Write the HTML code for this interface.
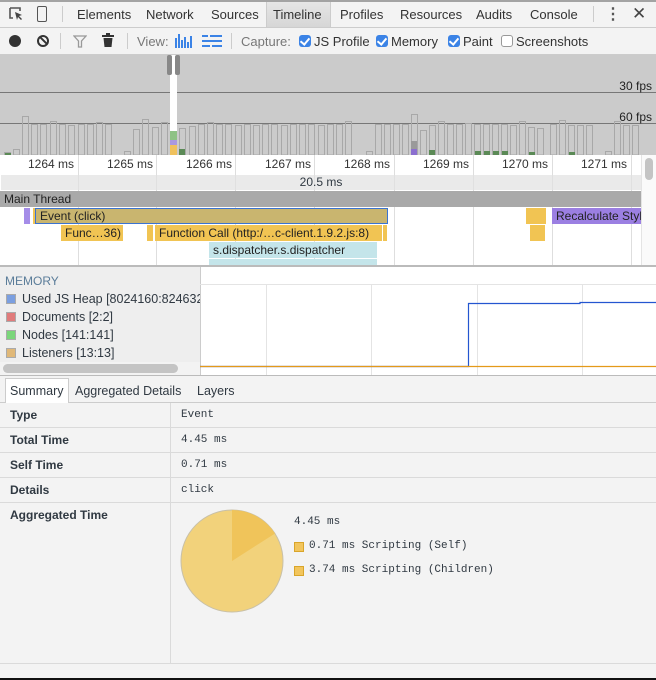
<!DOCTYPE html>
<html><head><meta charset="utf-8"><style>
*{margin:0;padding:0;box-sizing:border-box}
body{width:656px;height:680px;overflow:hidden;background:#f3f3f3;font-family:"Liberation Sans",sans-serif;font-size:12px;color:#303942;position:relative}
.a{position:absolute}
.t{position:absolute;top:7px;font-size:13px;color:#333}
.m{font-family:"Liberation Mono",monospace;font-size:11px}
.cb{position:absolute;top:35px;width:12px;height:12px;border-radius:3px;background:#3b83e6}
.cb::after{content:"";position:absolute;left:3px;top:1px;width:4px;height:7px;border:solid #fff;border-width:0 2px 2px 0;transform:rotate(40deg)}
.lbl{position:absolute;top:34px;font-size:13px;color:#333}
.rl{position:absolute;top:157px;font-size:12px;color:#333}
.gl{position:absolute;top:155px;width:1px;height:111px;background:#dedede}
.ev{position:absolute;height:16px;line-height:16px;font-size:12px;color:#222;padding-left:4px;white-space:nowrap;overflow:hidden}
.row{position:absolute;left:0;width:656px;height:25px;border-bottom:1px solid #dadada}
.row b{position:absolute;left:10px;top:5px;font-size:12px;color:#303942}
.row span{position:absolute;left:181px;top:6px}
</style></head><body>
<div class="a" style="left:0;top:0;width:656px;height:2px;background:#a3a3a3"></div>
<div class="a" style="left:0;top:27px;width:656px;height:1px;background:#ccc"></div>
<!-- tab bar icons -->
<svg class="a" style="left:8;top:6px;left:8px" width="16" height="16" viewBox="0 0 16 16"><path d="M2 2h10v3M2 2v10h3" fill="none" stroke="#555" stroke-width="1.6"/><path d="M7 6l7 3-3 1 3 3-1 1-3-3-1 3z" fill="#444"/></svg>
<div class="a" style="left:37px;top:6px;width:10px;height:16px;border:1.6px solid #555;border-radius:2px"></div>
<div class="a" style="left:62px;top:6px;width:1px;height:16px;background:#ccc"></div>
<div class="a" style="left:266px;top:2px;width:65px;height:25px;background:linear-gradient(#e6e6e6,#d6d6d6);border-left:1px solid #ccc;border-right:1px solid #ccc"></div>
<div class="t" style="left:77px">Elements</div>
<div class="t" style="left:146px">Network</div>
<div class="t" style="left:211px">Sources</div>
<div class="t" style="left:273px">Timeline</div>
<div class="t" style="left:340px">Profiles</div>
<div class="t" style="left:400px">Resources</div>
<div class="t" style="left:476px">Audits</div>
<div class="t" style="left:530px">Console</div>
<div class="a" style="left:593px;top:6px;width:1px;height:16px;background:#ccc"></div>
<div class="a" style="left:605px;top:4px;font-size:16px;font-weight:bold;color:#555">⋮</div>
<div class="a" style="left:632px;top:4px;font-size:17px;color:#444">✕</div>
<!-- toolbar -->
<div class="a" style="left:0;top:54px;width:656px;height:1px;background:#ccc"></div>
<div class="a" style="left:9px;top:35px;width:12px;height:12px;border-radius:6px;background:#333"></div>
<div class="a" style="left:37px;top:35px;width:12px;height:12px;border-radius:6px;border:2px solid #333"><div class="a" style="left:4px;top:-1px;width:2px;height:10px;background:#333;transform:rotate(-45deg)"></div></div>
<div class="a" style="left:60px;top:33px;width:1px;height:16px;background:#ccc"></div>
<svg class="a" style="left:73px;top:34px" width="14" height="14"><path d="M1 2h12l-4.5 5v6h-3V7z" fill="none" stroke="#999" stroke-width="1.3"/></svg>
<svg class="a" style="left:102px;top:33px" width="12" height="15"><rect x="0" y="2" width="12" height="2" fill="#333"/><rect x="4" y="0" width="4" height="2" fill="#333"/><path d="M1.5 5h9l-1 9h-7z" fill="#333"/></svg>
<div class="a" style="left:127px;top:33px;width:1px;height:16px;background:#ccc"></div>
<div class="lbl" style="left:137px;color:#777">View:</div>
<svg class="a" style="left:175px;top:34px" width="20" height="14"><g fill="#3b83e6"><rect x="0" y="4" width="2" height="10"/><rect x="3" y="0" width="2" height="14"/><rect x="6" y="6" width="2" height="8"/><rect x="9" y="3" width="2" height="11"/><rect x="12" y="8" width="2" height="6"/><rect x="15" y="2" width="2" height="12"/></g></svg>
<svg class="a" style="left:202px;top:35px" width="20" height="12"><g fill="#3b83e6"><rect x="0" y="0" width="6" height="2"/><rect x="8" y="0" width="12" height="2"/><rect x="0" y="5" width="20" height="2"/><rect x="0" y="10" width="8" height="2"/><rect x="10" y="10" width="10" height="2"/></g></svg>
<div class="a" style="left:231px;top:33px;width:1px;height:16px;background:#ccc"></div>
<div class="lbl" style="left:241px;color:#777">Capture:</div>
<div class="cb" style="left:299px"></div><div class="lbl" style="left:314px">JS Profile</div>
<div class="cb" style="left:376px"></div><div class="lbl" style="left:391px">Memory</div>
<div class="cb" style="left:448px"></div><div class="lbl" style="left:463px">Paint</div>
<div class="a" style="left:501px;top:35px;width:12px;height:12px;border-radius:3px;border:1px solid #999;background:#fff"></div><div class="lbl" style="left:516px">Screenshots</div>
<!-- overview -->
<svg class="a" style="left:0;top:55px" width="656" height="100">
<rect width="656" height="100" fill="#cbcbcb"/>
<line x1="0" y1="37.5" x2="656" y2="37.5" stroke="#777"/>
<line x1="0" y1="68.5" x2="656" y2="68.5" stroke="#777"/>
<text x="652" y="35" font-size="12" text-anchor="end" fill="#222" font-family="Liberation Sans">30 fps</text>
<text x="652" y="66" font-size="12" text-anchor="end" fill="#222" font-family="Liberation Sans">60 fps</text>
<g fill="none" stroke="#a8a8a8">
<rect x="4.5" y="97.5" width="6" height="2.5"/><rect x="13.5" y="94.5" width="6" height="5.5"/><rect x="22.5" y="61.5" width="6" height="38.5"/><rect x="31.5" y="69.5" width="6" height="30.5"/><rect x="40.5" y="69.5" width="6" height="30.5"/><rect x="50.5" y="66.5" width="6" height="33.5"/><rect x="59.5" y="69.5" width="6" height="30.5"/><rect x="68.5" y="70.5" width="6" height="29.5"/><rect x="78.5" y="69.5" width="6" height="30.5"/><rect x="87.5" y="69.5" width="6" height="30.5"/><rect x="96.5" y="67.5" width="6" height="32.5"/><rect x="105.5" y="69.5" width="6" height="30.5"/>
<rect x="124.5" y="96.5" width="6" height="3.5"/><rect x="133.5" y="74.5" width="6" height="25.5"/><rect x="142.5" y="64.5" width="6" height="35.5"/><rect x="152.5" y="72.5" width="6" height="27.5"/><rect x="161.5" y="67.5" width="6" height="32.5"/>
<rect x="179.5" y="73.5" width="6" height="26.5"/><rect x="189.5" y="71.5" width="6" height="28.5"/><rect x="198.5" y="69.5" width="6" height="30.5"/><rect x="207.5" y="67.5" width="6" height="32.5"/><rect x="216.5" y="69.5" width="6" height="30.5"/><rect x="225.5" y="69.5" width="6" height="30.5"/><rect x="235.5" y="70.5" width="6" height="29.5"/><rect x="244.5" y="69.5" width="6" height="30.5"/><rect x="253.5" y="70.5" width="6" height="29.5"/><rect x="262.5" y="69.5" width="6" height="30.5"/><rect x="271.5" y="69.5" width="6" height="30.5"/><rect x="281.5" y="70.5" width="6" height="29.5"/><rect x="290.5" y="69.5" width="6" height="30.5"/><rect x="299.5" y="69.5" width="6" height="30.5"/><rect x="308.5" y="69.5" width="6" height="30.5"/><rect x="318.5" y="70.5" width="6" height="29.5"/><rect x="327.5" y="69.5" width="6" height="30.5"/><rect x="336.5" y="69.5" width="6" height="30.5"/><rect x="345.5" y="66.5" width="6" height="33.5"/>
<rect x="366.5" y="96.5" width="6" height="3.5"/><rect x="375.5" y="69.5" width="6" height="30.5"/><rect x="384.5" y="69.5" width="6" height="30.5"/><rect x="393.5" y="69.5" width="6" height="30.5"/><rect x="402.5" y="69.5" width="6" height="30.5"/><rect x="411.5" y="59.5" width="6" height="40.5"/><rect x="420.5" y="75.5" width="6" height="24.5"/><rect x="429.5" y="70.5" width="6" height="29.5"/><rect x="438.5" y="66.5" width="6" height="33.5"/><rect x="447.5" y="69.5" width="6" height="30.5"/><rect x="456.5" y="69.5" width="6" height="30.5"/><rect x="465.5" y="68.5" width="6" height="31.5"/><rect x="474.5" y="69.5" width="6" height="30.5"/><rect x="483.5" y="69.5" width="6" height="30.5"/><rect x="492.5" y="69.5" width="6" height="30.5"/><rect x="501.5" y="69.5" width="6" height="30.5"/><rect x="510.5" y="70.5" width="6" height="29.5"/><rect x="519.5" y="66.5" width="6" height="33.5"/><rect x="528.5" y="72.5" width="6" height="27.5"/><rect x="537.5" y="73.5" width="6" height="26.5"/><rect x="550.5" y="69.5" width="6" height="30.5"/><rect x="559.5" y="65.5" width="6" height="34.5"/><rect x="568.5" y="70.5" width="6" height="29.5"/><rect x="577.5" y="70.5" width="6" height="29.5"/><rect x="586.5" y="70.5" width="6" height="29.5"/><rect x="605.5" y="96.5" width="6" height="3.5"/><rect x="614.5" y="66.5" width="6" height="33.5"/><rect x="623.5" y="70.5" width="6" height="29.5"/><rect x="632.5" y="70.5" width="6" height="29.5"/>
</g>
<g fill="#5b8a56"><rect x="5" y="98" width="6" height="2"/><rect x="429" y="95" width="6" height="5"/><rect x="475" y="96" width="6" height="4"/><rect x="484" y="96" width="6" height="4"/><rect x="493" y="96" width="6" height="4"/><rect x="502" y="96" width="6" height="4"/><rect x="529" y="97" width="6" height="3"/><rect x="569" y="97" width="6" height="3"/><rect x="179" y="94" width="6" height="6"/></g>
<rect x="170" y="0" width="7" height="100" fill="#fff"/>
<rect x="170" y="76" width="7" height="9" fill="#8fc285"/><rect x="170" y="85" width="7" height="5" fill="#a998e0"/><rect x="170" y="90" width="7" height="10" fill="#efc15d"/>
<rect x="411" y="86" width="6" height="8" fill="#9a9a9a"/><rect x="411" y="94" width="6" height="6" fill="#8b6fcf"/>
<rect x="167" y="0" width="5" height="20" rx="2" fill="#888"/><rect x="175" y="0" width="5" height="20" rx="2" fill="#888"/>
</svg>
<!-- ruler & flame -->
<div class="a" style="left:0;top:155px;width:656px;height:111px;background:#fff"></div>
<div class="gl" style="left:78px"></div><div class="gl" style="left:156px"></div><div class="gl" style="left:235px"></div><div class="gl" style="left:314px"></div><div class="gl" style="left:394px"></div><div class="gl" style="left:473px"></div><div class="gl" style="left:552px"></div><div class="gl" style="left:631px"></div>
<div class="rl" style="left:28px">1264 ms</div><div class="rl" style="left:107px">1265 ms</div><div class="rl" style="left:186px">1266 ms</div><div class="rl" style="left:265px">1267 ms</div><div class="rl" style="left:344px">1268 ms</div><div class="rl" style="left:423px">1269 ms</div><div class="rl" style="left:502px">1270 ms</div><div class="rl" style="left:581px">1271 ms</div>
<div class="a" style="left:1px;top:175px;width:640px;height:15px;background:rgba(225,225,225,.7);text-align:center;line-height:15px">20.5 ms</div>
<div class="a" style="left:0;top:191px;width:641px;height:16px;background:#a9a9a9;line-height:16px;padding-left:4px;color:#222">Main Thread</div>
<div class="ev" style="left:24px;top:208px;width:6px;background:#a58de8"></div>
<div class="ev" style="left:33px;top:208px;width:2px;background:#f1c453;padding:0"></div>
<div class="ev" style="left:35px;top:208px;width:353px;background:#c9b56f;border:1px solid #3b73d0;line-height:14px">Event (click)</div>
<div class="ev" style="left:61px;top:225px;width:62px;background:#f1c453">Func…36)</div>
<div class="ev" style="left:147px;top:225px;width:6px;background:#f1c453"></div>
<div class="ev" style="left:155px;top:225px;width:227px;background:#f1c453">Function Call (http:/…c-client.1.9.2.js:8)</div>
<div class="ev" style="left:383px;top:225px;width:4px;background:#f1c453;padding:0"></div>
<div class="ev" style="left:209px;top:242px;width:168px;background:#c4e5ea">s.dispatcher.s.dispatcher</div>
<div class="ev" style="left:209px;top:259px;width:168px;height:7px;background:#c4e5ea"></div>
<div class="ev" style="left:526px;top:208px;width:20px;background:#f1c453"></div>
<div class="ev" style="left:530px;top:225px;width:15px;background:#f1c453"></div>
<div class="ev" style="left:552px;top:208px;width:89px;background:#9b7fe2">Recalculate Style</div>
<div class="a" style="left:641px;top:155px;width:15px;height:111px;background:#fafafa;border-left:1px solid #e4e4e4"></div>
<div class="a" style="left:645px;top:158px;width:8px;height:22px;border-radius:4px;background:#c4c4c4"></div>
<div class="a" style="left:0;top:265px;width:656px;height:2px;background:#bbb"></div>
<!-- memory -->
<div class="a" style="left:0;top:267px;width:200px;height:108px;background:#eee"></div>
<div class="a" style="left:5px;top:274px;color:#5a7c99">MEMORY</div>
<div class="a" style="left:6px;top:294px;width:10px;height:10px;background:#7b9fe0;border:1px solid #aaa"></div><div class="a" style="left:22px;top:292px;font-size:12.5px;white-space:nowrap;width:178px;overflow:hidden">Used JS Heap [8024160:8246320]</div>
<div class="a" style="left:6px;top:312px;width:10px;height:10px;background:#e07b7b;border:1px solid #aaa"></div><div class="a" style="left:22px;top:310px;font-size:12.5px">Documents [2:2]</div>
<div class="a" style="left:6px;top:330px;width:10px;height:10px;background:#7bd67b;border:1px solid #aaa"></div><div class="a" style="left:22px;top:328px;font-size:12.5px">Nodes [141:141]</div>
<div class="a" style="left:6px;top:348px;width:10px;height:10px;background:#e0b878;border:1px solid #aaa"></div><div class="a" style="left:22px;top:346px;font-size:12.5px">Listeners [13:13]</div>
<div class="a" style="left:0;top:362px;width:200px;height:13px;background:#f3f3f3"></div>
<div class="a" style="left:3px;top:364px;width:175px;height:9px;border-radius:5px;background:#c4c4c4"></div>
<div class="a" style="left:200px;top:267px;width:456px;height:108px;background:#fff;border-left:1px solid #ccc"></div>
<svg class="a" style="left:200px;top:267px" width="456" height="108">
<line x1="0" y1="17.5" x2="456" y2="17.5" stroke="#e4e4e4"/>
<g stroke="#e4e4e4"><line x1="66.5" y1="17" x2="66.5" y2="108"/><line x1="171.5" y1="17" x2="171.5" y2="108"/><line x1="277.5" y1="17" x2="277.5" y2="108"/><line x1="382.5" y1="17" x2="382.5" y2="108"/></g>
<path d="M0 99.5H268.5V36.5H380V35.5H456" fill="none" stroke="#2456d0" stroke-width="1.2"/>
<line x1="0" y1="99.5" x2="456" y2="99.5" stroke="#e49a1a" stroke-width="1.2"/>
</svg>
<div class="a" style="left:0;top:375px;width:656px;height:1px;background:#bbb"></div>
<!-- details tabs -->
<div class="a" style="left:0;top:402px;width:656px;height:1px;background:#ccc"></div>
<div class="a" style="left:5px;top:378px;width:64px;height:25px;background:#fff;border:1px solid #ccc;border-bottom:none"></div>
<div class="a" style="left:10px;top:384px;font-size:12.5px">Summary</div>
<div class="a" style="left:75px;top:384px;font-size:12.5px">Aggregated Details</div>
<div class="a" style="left:197px;top:384px;font-size:12.5px">Layers</div>
<div class="row" style="top:403px;height:25px"><b>Type</b><span class="m">Event</span></div>
<div class="row" style="top:428px"><b>Total Time</b><span class="m">4.45 ms</span></div>
<div class="row" style="top:453px"><b>Self Time</b><span class="m">0.71 ms</span></div>
<div class="row" style="top:478px"><b>Details</b><span class="m">click</span></div>
<div class="row" style="top:503px;height:161px"><b>Aggregated Time</b></div>
<div class="a" style="left:170px;top:403px;width:1px;height:260px;background:#dadada"></div>
<svg class="a" style="left:178px;top:508px" width="110" height="110">
<circle cx="54" cy="53" r="51" fill="#f2d27b" stroke="#c8c0a8" stroke-width="1"/>
<path d="M54 53V2A51 51 0 0 1 97 25.5Z" fill="#f0c45a"/>
</svg>
<div class="a m" style="left:294px;top:516px">4.45 ms</div>
<div class="a" style="left:294px;top:542px;width:10px;height:10px;background:#f2c55c;border:1px solid #d9a52a"></div><div class="a m" style="left:309px;top:540px">0.71 ms Scripting (Self)</div>
<div class="a" style="left:294px;top:566px;width:10px;height:10px;background:#f2c55c;border:1px solid #d9a52a"></div><div class="a m" style="left:309px;top:564px">3.74 ms Scripting (Children)</div>
<div class="a" style="left:0;top:678px;width:656px;height:2px;background:#111"></div>
</body></html>
